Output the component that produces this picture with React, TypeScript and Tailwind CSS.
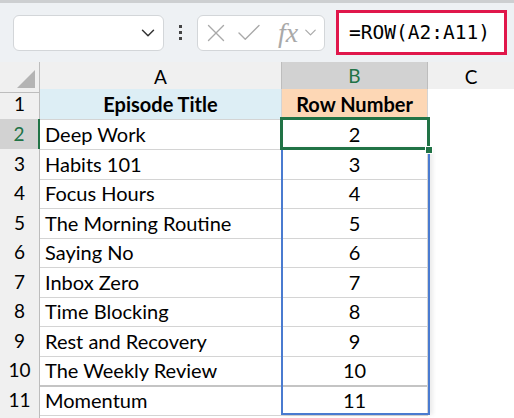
import { Check, ChevronDown, X } from 'lucide-react'

const rows = [
  { n: 1, title: 'Episode Title', value: 'Row Number', h: 'h-[30px]' },
  { n: 2, title: 'Deep Work', value: '2', h: 'h-[30px]' },
  { n: 3, title: 'Habits 101', value: '3', h: 'h-[29px]' },
  { n: 4, title: 'Focus Hours', value: '4', h: 'h-[30px]' },
  { n: 5, title: 'The Morning Routine', value: '5', h: 'h-[29px]' },
  { n: 6, title: 'Saying No', value: '6', h: 'h-[30px]' },
  { n: 7, title: 'Inbox Zero', value: '7', h: 'h-[29px]' },
  { n: 8, title: 'Time Blocking', value: '8', h: 'h-[30px]' },
  { n: 9, title: 'Rest and Recovery', value: '9', h: 'h-[29px]' },
  { n: 10, title: 'The Weekly Review', value: '10', h: 'h-[30px]' },
  { n: 11, title: 'Momentum', value: '11', h: 'h-[29px]' },
]

export default function App() {
  return (
    <div className="relative w-[514px] h-[418px] overflow-hidden bg-white font-['Lato',sans-serif] text-[20px] text-black">
      {/* formula bar */}
      <div className="relative flex items-center bg-[#eef1f4] h-[62px] border-t-[3px] border-[#cdcfd1]">
        <div className="flex justify-end items-center bg-white ml-[13px] pr-[4px] border border-[#d3d6d9] rounded-[6px] w-[151px] h-[36px]">
          <ChevronDown size={22} strokeWidth={1.6} className="text-[#333]" />
        </div>
        <div className="flex flex-col justify-center items-center gap-[3px] w-[33px]">
          <span className="bg-[#444] w-[3px] h-[3px]" />
          <span className="bg-[#444] w-[3px] h-[3px]" />
          <span className="bg-[#444] w-[3px] h-[3px]" />
        </div>
        <div className="flex items-center bg-white pl-[3px] border border-[#d3d6d9] rounded-[6px] w-[128px] h-[36px] text-[#a9a9a9]">
          <X size={30} strokeWidth={1.1} />
          <Check size={30} strokeWidth={1.1} className="ml-[3px]" />
          <span className="ml-[14px] font-['Liberation_Serif',serif] text-[28px] italic leading-none">fx</span>
          <ChevronDown size={19} strokeWidth={1.5} className="ml-[3px]" />
        </div>
        <div className="flex items-center bg-white ml-[11px] pl-[10px] border-[#e0174b] border-[3px] w-[171px] h-[45px] font-['DejaVu_Sans_Mono',monospace] text-[19.5px]">
          =ROW(A2:A11)
        </div>
      </div>

      {/* sheet */}
      <div className="relative">
        {/* column headers */}
        <div className="grid grid-cols-[40px_242px_146px_86px] h-[27px] bg-[#f0f0f0] text-[19px]">
          <div className="relative border-[#bdbdbd] border-r border-b">
            <div className="right-[4px] bottom-[4px] absolute border-transparent border-r-[#b4b4b4] border-b-[#b4b4b4] border-[9px] w-0 h-0" />
          </div>
          <div className="flex justify-center items-center border-[#bdbdbd] border-r border-b">A</div>
          <div className="flex justify-center items-center bg-[#d2d2d2] border-[#217346] border-b-2 border-r border-r-[#bdbdbd] text-[#217346]">B</div>
          <div className="flex justify-center items-center border-[#bdbdbd] border-b">C</div>
        </div>

        {rows.map((r) => {
          const head = r.n === 1
          const sel = r.n === 2
          return (
            <div key={r.n} className={`grid grid-cols-[40px_242px_146px_86px] ${r.h}`}>
              <div
                className={
                  sel
                    ? 'flex justify-center items-center bg-[#d2d2d2] border-[#217346] border-r-2 border-b border-b-[#bdbdbd] text-[#217346] text-[19px]'
                    : 'flex justify-center items-center bg-[#f0f0f0] border-[#bdbdbd] border-r border-b text-[19px]'
                }
              >
                {r.n}
              </div>
              <div
                className={
                  head
                    ? 'flex justify-center items-center bg-[#ddeef5] border-[#d4d4d4] border-r border-b font-bold'
                    : r.n === 10
                      ? 'flex items-center pl-[5px] border-[#c4c4c4] border-r border-r-[#d4d4d4] border-b-2'
                      : 'flex items-center pl-[5px] border-[#d4d4d4] border-r border-b'
                }
              >
                {r.title}
              </div>
              <div
                className={
                  head
                    ? 'flex justify-center items-center bg-[#fdd7b5] border-[#d4d4d4] border-r border-b font-bold'
                    : r.n === 10
                      ? 'flex justify-center items-center border-[#c4c4c4] border-r border-r-[#d4d4d4] border-b-2'
                      : 'flex justify-center items-center border-[#d4d4d4] border-r border-b'
                }
              >
                {r.value}
              </div>
              <div className="bg-white" />
            </div>
          )
        })}

        <div className="grid grid-cols-[40px_474px] h-[10px]">
          <div className="bg-[#f0f0f0] border-[#bdbdbd] border-r" />
          <div />
        </div>

        {/* reference range B2:B11 */}
        <div className="top-[86px] left-[281px] absolute border-[#4a7bd0] border-2 w-[149px] h-[267px] shadow-[3px_0_4px_rgba(0,0,0,0.08)]" />
        {/* active cell B2 */}
        <div className="top-[55px] left-[280px] absolute border-[#217346] border-[3px] w-[150px] h-[33px]" />
        <div className="top-[84px] left-[425px] absolute bg-[#217346] border border-white w-[8px] h-[8px]" />
      </div>
    </div>
  )
}
